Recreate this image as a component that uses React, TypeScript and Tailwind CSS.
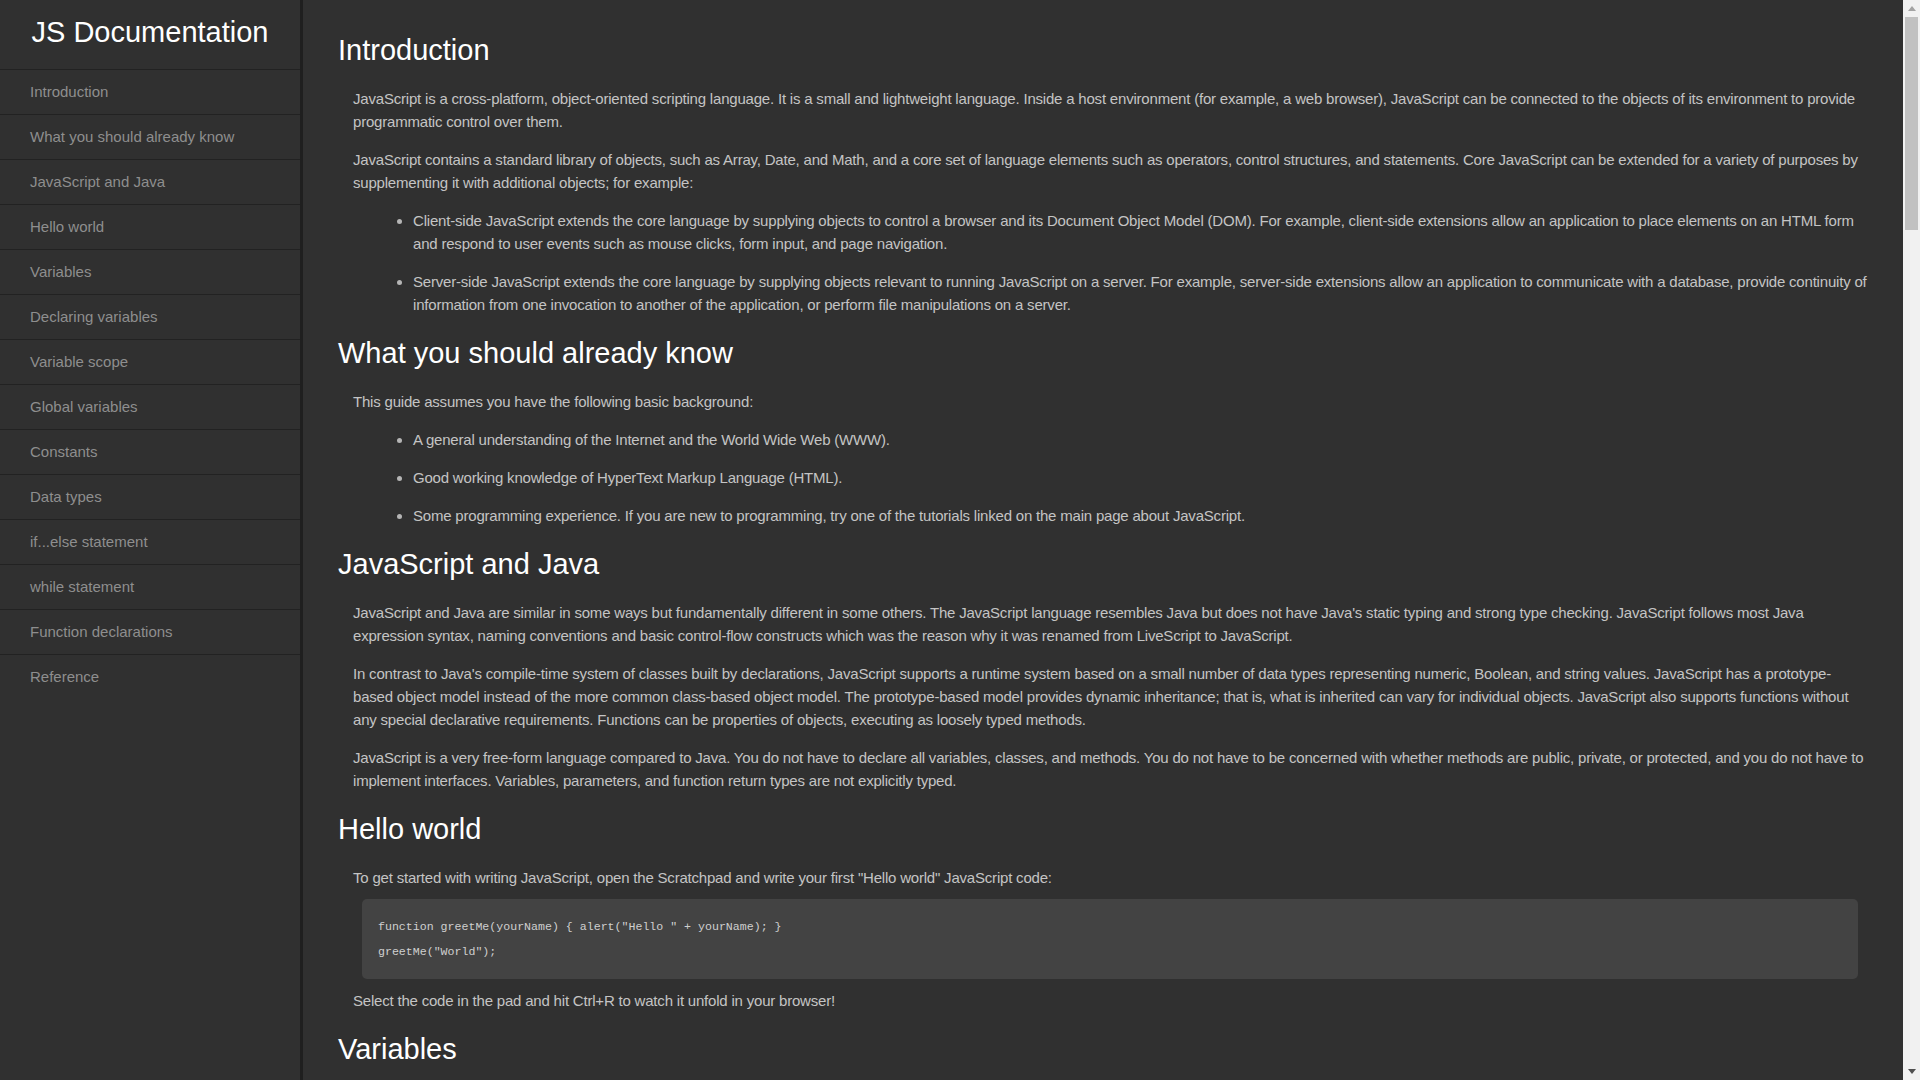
import { twMerge } from "tailwind-merge";

type Block =
  | { kind: "p"; text: string; className?: string }
  | { kind: "ul"; items: string[] }
  | { kind: "code"; lines: string[] };

type Section = { title: string; blocks: Block[] };

const sections: Section[] = [
  {
    title: "Introduction",
    blocks: [
      {
        kind: "p",
        text: "JavaScript is a cross-platform, object-oriented scripting language. It is a small and lightweight language. Inside a host environment (for example, a web browser), JavaScript can be connected to the objects of its environment to provide programmatic control over them.",
      },
      {
        kind: "p",
        text: "JavaScript contains a standard library of objects, such as Array, Date, and Math, and a core set of language elements such as operators, control structures, and statements. Core JavaScript can be extended for a variety of purposes by supplementing it with additional objects; for example:",
      },
      {
        kind: "ul",
        items: [
          "Client-side JavaScript extends the core language by supplying objects to control a browser and its Document Object Model (DOM). For example, client-side extensions allow an application to place elements on an HTML form and respond to user events such as mouse clicks, form input, and page navigation.",
          "Server-side JavaScript extends the core language by supplying objects relevant to running JavaScript on a server. For example, server-side extensions allow an application to communicate with a database, provide continuity of information from one invocation to another of the application, or perform file manipulations on a server.",
        ],
      },
    ],
  },
  {
    title: "What you should already know",
    blocks: [
      { kind: "p", text: "This guide assumes you have the following basic background:" },
      {
        kind: "ul",
        items: [
          "A general understanding of the Internet and the World Wide Web (WWW).",
          "Good working knowledge of HyperText Markup Language (HTML).",
          "Some programming experience. If you are new to programming, try one of the tutorials linked on the main page about JavaScript.",
        ],
      },
    ],
  },
  {
    title: "JavaScript and Java",
    blocks: [
      {
        kind: "p",
        text: "JavaScript and Java are similar in some ways but fundamentally different in some others. The JavaScript language resembles Java but does not have Java's static typing and strong type checking. JavaScript follows most Java expression syntax, naming conventions and basic control-flow constructs which was the reason why it was renamed from LiveScript to JavaScript.",
      },
      {
        kind: "p",
        text: "In contrast to Java's compile-time system of classes built by declarations, JavaScript supports a runtime system based on a small number of data types representing numeric, Boolean, and string values. JavaScript has a prototype-based object model instead of the more common class-based object model. The prototype-based model provides dynamic inheritance; that is, what is inherited can vary for individual objects. JavaScript also supports functions without any special declarative requirements. Functions can be properties of objects, executing as loosely typed methods.",
      },
      {
        kind: "p",
        text: "JavaScript is a very free-form language compared to Java. You do not have to declare all variables, classes, and methods. You do not have to be concerned with whether methods are public, private, or protected, and you do not have to implement interfaces. Variables, parameters, and function return types are not explicitly typed.",
      },
    ],
  },
  {
    title: "Hello world",
    blocks: [
      {
        kind: "p",
        text: 'To get started with writing JavaScript, open the Scratchpad and write your first "Hello world" JavaScript code:',
        className: "mb-[10px]",
      },
      {
        kind: "code",
        lines: ['function greetMe(yourName) { alert("Hello " + yourName); }', 'greetMe("World");'],
      },
      {
        kind: "p",
        text: "Select the code in the pad and hit Ctrl+R to watch it unfold in your browser!",
        className: "mt-[10px]",
      },
    ],
  },
  {
    title: "Variables",
    blocks: [
      {
        kind: "p",
        text: "You use variables as symbolic names for values in your application. The names of variables, called identifiers, conform to certain rules.",
      },
      {
        kind: "p",
        text: 'A JavaScript identifier must start with a letter, underscore (_), or dollar sign ($); subsequent characters can also be digits (0-9). Because JavaScript is case sensitive, letters include the characters "A" through "Z" (uppercase) and the characters "a" through "z" (lowercase).',
      },
      {
        kind: "p",
        text: "You can use ISO 8859-1 or Unicode letters such as å and ü in identifiers. You can also use the Unicode escape sequences as characters in identifiers. Some examples of legal names are Number_hits, temp99, and _name.",
      },
    ],
  },
  {
    title: "Declaring variables",
    blocks: [
      { kind: "p", text: "You can declare a variable in three ways:" },
      {
        kind: "p",
        text: "With the keyword var. For example, var x = 42. This syntax can be used to declare both local and global variables.",
      },
      {
        kind: "p",
        text: "By simply assigning it a value. For example, x = 42. This always declares a global variable. It generates a strict JavaScript warning. You shouldn't use this variant.",
      },
      {
        kind: "p",
        text: "With the keyword let. For example, let y = 13. This syntax can be used to declare a block scope local variable. See Variable scope below.",
      },
    ],
  },
  {
    title: "Variable scope",
    blocks: [
      {
        kind: "p",
        text: "When you declare a variable outside of any function, it is called a global variable, because it is available to any other code in the current document. When you declare a variable within a function, it is called a local variable, because it is available only within that function.",
      },
      {
        kind: "p",
        text: "JavaScript before ECMAScript 2015 does not have block statement scope; rather, a variable declared within a block is local to the function (or global scope) that the block resides within. For example the following code will log 5, because the scope of x is the function (or global context) within which x is declared, not the block, which in this case is an if statement.",
        className: "mb-[10px]",
      },
      { kind: "code", lines: ["if (true) { var x = 5; }", "console.log(x); // 5"] },
      {
        kind: "p",
        text: "This behavior changes, when using the let declaration introduced in ECMAScript 2015.",
        className: "mt-[10px] mb-[10px]",
      },
      {
        kind: "code",
        lines: ["if (true) { let y = 5; }", "console.log(y); // ReferenceError: y is not defined"],
      },
    ],
  },
  {
    title: "Global variables",
    blocks: [
      {
        kind: "p",
        text: "Global variables are in fact properties of the global object. In web pages the global object is window, so you can set and access global variables using the window.variable syntax.",
      },
      {
        kind: "p",
        text: "Consequently, you can access global variables declared in one window or frame from another window or frame by specifying the window or frame name. For example, if a variable called phoneNumber is declared in a document, you can refer to this variable from an iframe as parent.phoneNumber.",
      },
    ],
  },
  {
    title: "Constants",
    blocks: [
      {
        kind: "p",
        text: "You can create a read-only, named constant with the const keyword. The syntax of a constant identifier is the same as for a variable identifier: it must start with a letter, underscore or dollar sign and can contain alphabetic, numeric, or underscore characters.",
        className: "mb-[10px]",
      },
      { kind: "code", lines: ["const PI = 3.14;"] },
      {
        kind: "p",
        text: "A constant cannot change value through assignment or be re-declared while the script is running. It has to be initialized to a value.",
        className: "mt-[10px]",
      },
      {
        kind: "p",
        text: "The scope rules for constants are the same as those for let block scope variables. If the const keyword is omitted, the identifier is assumed to represent a variable.",
      },
      {
        kind: "p",
        text: "You cannot declare a constant with the same name as a function or variable in the same scope. For example:",
        className: "mb-[10px]",
      },
      {
        kind: "code",
        lines: [
          "// THIS WILL CAUSE AN ERROR function f() {}; const f = 5;",
          "// THIS WILL CAUSE AN ERROR ALSO function f() { const g = 5; var g; //statements }",
        ],
      },
      {
        kind: "p",
        text: "However, object attributes are not protected, so the following statement is executed without problems.",
        className: "mt-[10px] mb-[10px]",
      },
      { kind: "code", lines: ['const MY_OBJECT = {"key": "value"};', 'MY_OBJECT.key = "otherValue";'] },
    ],
  },
  {
    title: "Data types",
    blocks: [
      { kind: "p", text: "The latest ECMAScript standard defines seven data types:" },
      {
        kind: "ul",
        items: [
          "Six data types that are primitives:",
          "Boolean. true and false.",
          "null. A special keyword denoting a null value. Because JavaScript is case-sensitive, null is not the same as Null, NULL, or any other variant.",
          "undefined. A top-level property whose value is undefined.",
          "Number. 42 or 3.14159.",
          'String. "Howdy"',
          "Symbol (new in ECMAScript 2015). A data type whose instances are unique and immutable.",
          "and Object",
        ],
      },
      {
        kind: "p",
        text: "Although these data types are a relatively small amount, they enable you to perform useful functions with your applications. Objects and functions are the other fundamental elements in the language. You can think of objects as named containers for values, and functions as procedures that your application can perform.",
      },
    ],
  },
  {
    title: "if...else statement",
    blocks: [
      {
        kind: "p",
        text: "Use the if statement to execute a statement if a logical condition is true. Use the optional else clause to execute a statement if the condition is false. An if statement looks as follows:",
        className: "mb-[10px]",
      },
      { kind: "code", lines: ["if (condition) { statement_1; } else { statement_2; }"] },
      {
        kind: "p",
        text: "condition can be any expression that evaluates to true or false. See Boolean for an explanation of what evaluates to true and false. If condition evaluates to true, statement_1 is executed; otherwise, statement_2 is executed. statement_1 and statement_2 can be any statement, including further nested if statements.",
        className: "mt-[10px]",
      },
      {
        kind: "p",
        text: "You may also compound the statements using else if to have multiple conditions tested in sequence, as follows:",
        className: "mb-[10px]",
      },
      {
        kind: "code",
        lines: [
          "if (condition_1) { statement_1; } else if (condition_2) { statement_2; } else if (condition_n) { statement_n; } else { statement_last; }",
        ],
      },
      {
        kind: "p",
        text: "In the case of multiple conditions only the first logical condition which evaluates to true will be executed. To execute multiple statements, group them within a block statement ({ ... }) . In general, it's good practice to always use block statements, especially when nesting if statements:",
        className: "mt-[10px] mb-[10px]",
      },
      {
        kind: "code",
        lines: [
          "if (condition) { statement_1_runs_if_condition_is_true; statement_2_runs_if_condition_is_true; } else { statement_3_runs_if_condition_is_false; statement_4_runs_if_condition_is_false; }",
        ],
      },
      {
        kind: "p",
        text: "It is advisable to not use simple assignments in a conditional expression, because the assignment can be confused with equality when glancing over the code. For example, do not use the following code:",
        className: "mt-[10px] mb-[10px]",
      },
      { kind: "code", lines: ["if (x = y) { /* statements here */ }"] },
      {
        kind: "p",
        text: "If you need to use an assignment in a conditional expression, a common practice is to put additional parentheses around the assignment. For example:",
        className: "mt-[10px] mb-[10px]",
      },
      { kind: "code", lines: ["if ((x = y)) { /* statements here */ }"] },
    ],
  },
  {
    title: "while statement",
    blocks: [
      {
        kind: "p",
        text: "A while statement executes its statements as long as a specified condition evaluates to true. A while statement looks as follows:",
        className: "mb-[10px]",
      },
      { kind: "code", lines: ["while (condition) statement"] },
      {
        kind: "p",
        text: "If the condition becomes false, statement within the loop stops executing and control passes to the statement following the loop.",
        className: "mt-[10px]",
      },
      {
        kind: "p",
        text: "The condition test occurs before statement in the loop is executed. If the condition returns true, statement is executed and the condition is tested again. If the condition returns false, execution stops and control is passed to the statement following while.",
      },
      {
        kind: "p",
        text: "To execute multiple statements, use a block statement ({ ... }) to group those statements.",
      },
      { kind: "p", text: "Example:" },
      {
        kind: "p",
        text: "The following while loop iterates as long as n is less than three:",
        className: "mb-[10px]",
      },
      { kind: "code", lines: ["var n = 0; var x = 0; while (n < 3) { n++; x += n; }"] },
      {
        kind: "p",
        text: "With each iteration, the loop increments n and adds that value to x. Therefore, x and n take on the following values:",
        className: "mt-[10px]",
      },
      {
        kind: "ul",
        items: [
          "After the first pass: n = 1 and x = 1",
          "After the second pass: n = 2 and x = 3",
          "After the third pass: n = 3 and x = 6",
        ],
      },
      {
        kind: "p",
        text: "After completing the third pass, the condition n < 3 is no longer true, so the loop terminates.",
      },
    ],
  },
  {
    title: "Function declarations",
    blocks: [
      {
        kind: "p",
        text: "A function definition (also called a function declaration, or function statement) consists of the function keyword, followed by:",
      },
      {
        kind: "ul",
        items: [
          "The name of the function.",
          "A list of arguments to the function, enclosed in parentheses and separated by commas.",
          "The JavaScript statements that define the function, enclosed in curly brackets, { }.",
        ],
      },
      {
        kind: "p",
        text: "For example, the following code defines a simple function named square:",
        className: "mb-[10px]",
      },
      { kind: "code", lines: ["function square(number) { return number * number; }"] },
      {
        kind: "p",
        text: "The function square takes one argument, called number. The function consists of one statement that says to return the argument of the function (that is, number) multiplied by itself. The return statement specifies the value returned by the function.",
        className: "mt-[10px] mb-[10px]",
      },
      { kind: "code", lines: ["return number * number;"] },
      {
        kind: "p",
        text: "Primitive parameters (such as a number) are passed to functions by value; the value is passed to the function, but if the function changes the value of the parameter, this change is not reflected globally or in the calling function.",
        className: "mt-[10px]",
      },
    ],
  },
  {
    title: "Reference",
    blocks: [{ kind: "ul", items: ["All the documentation in this page is taken from MDN"] }],
  },
];

function Para({ text, className }: { text: string; className?: string }) {
  return (
    <p
      className={twMerge(
        "ml-[15px] mt-[15px] mb-[15px] text-[15px] leading-[23px] tracking-[-0.2px] text-[#c4c4c4]",
        className,
      )}
    >
      {text}
    </p>
  );
}

function CodeBox({ lines }: { lines: string[] }) {
  return (
    <pre
      className="ml-[24px] mr-[10px] my-[10px] whitespace-pre-wrap rounded-[5px] bg-[#434343] px-[16px] py-[15px] text-[11.6px] leading-[25px] text-[#cfcfcf]"
      style={{ fontFamily: '"DejaVu Sans Mono", monospace' }}
    >
      {lines.map((line) => (
        <code key={line} className="block">
          {line}
        </code>
      ))}
    </pre>
  );
}

// the page scrollbar, as it shows in the reference
function Scrollbar() {
  return (
    <div className="sticky top-0 flex h-screen w-[17px] shrink-0 flex-col bg-[#f1f1f1]">
      <div className="flex h-[17px] items-center justify-center">
        <svg width="8" height="5" viewBox="0 0 8 5">
          <path d="M0 5 L4 0 L8 5 Z" fill="#a3a3a3" />
        </svg>
      </div>
      <div className="flex-1 px-[2px]">
        <div className="h-[213px] bg-[#c1c1c1]" />
      </div>
      <div className="flex h-[17px] items-center justify-center">
        <svg width="8" height="5" viewBox="0 0 8 5">
          <path d="M0 0 L8 0 L4 5 Z" fill="#505050" />
        </svg>
      </div>
    </div>
  );
}

export default function App() {
  return (
    <div
      className="flex min-h-screen bg-[#303030]"
      style={{ fontFamily: '"Liberation Sans", Arial, sans-serif' }}
    >
      <nav className="sticky top-0 h-screen w-[303px] shrink-0 border-r-[3px] border-[#1f1f1f] bg-[#303030]">
        <header className="pt-[16px] pb-[20px] text-center text-[29px] leading-[33px] text-white">
          JS Documentation
        </header>
        {sections.map((s) => (
          <a
            key={s.title}
            href={`#${s.title.replace(/\W+/g, "_")}`}
            className="flex h-[45px] items-center border-t border-[#222222] pl-[30px] text-[15px] text-[#8e8e8e]"
          >
            {s.title}
          </a>
        ))}
      </nav>

      <main className="min-w-0 flex-1 px-[35px] pt-[13px] pb-[40px]">
        {sections.map((s) => (
          <section key={s.title} id={s.title.replace(/\W+/g, "_")}>
            <h2 className="my-[20px] text-[29px] leading-[34px] text-white">{s.title}</h2>
            {s.blocks.map((b, i) => {
              if (b.kind === "p") return <Para key={i} text={b.text} className={b.className} />;
              if (b.kind === "code") return <CodeBox key={i} lines={b.lines} />;
              return (
                <ul
                  key={i}
                  className="ml-[15px] list-disc pl-[60px] text-[15px] leading-[23px] tracking-[-0.2px] text-[#c4c4c4]"
                >
                  {b.items.map((item) => (
                    <li key={item} className="my-[15px] marker:text-[#b5b5b5]">
                      {item}
                    </li>
                  ))}
                </ul>
              );
            })}
          </section>
        ))}
      </main>

      <Scrollbar />
    </div>
  );
}
